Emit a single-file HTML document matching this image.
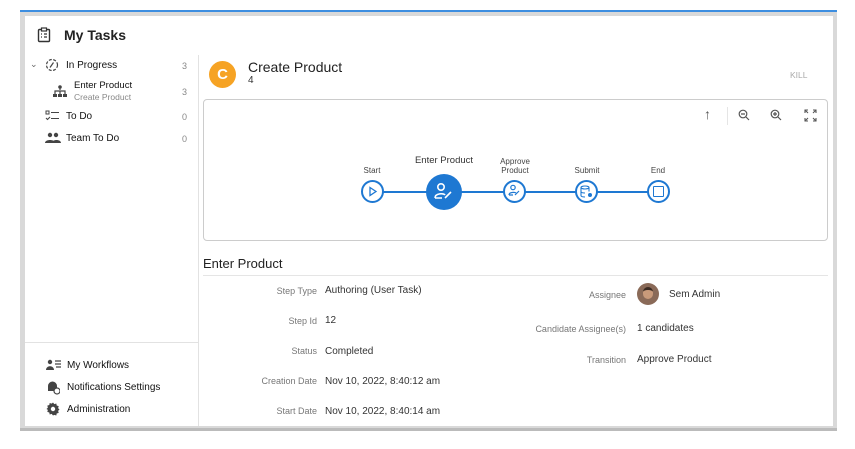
<!DOCTYPE html>
<html><head><style>
*{margin:0;padding:0;box-sizing:border-box}
body{width:855px;height:449px;background:#fff;font-family:"Liberation Sans",sans-serif;position:relative;overflow:hidden;color:#222}
.a{position:absolute;white-space:nowrap}
.frame{left:20px;top:10px;width:817px;height:420px;background:#d9d9d9;border-top:2px solid #3d8ee0}
.inner{left:25px;top:16px;width:808px;height:410px;background:#fff}
.lbl{font-size:9px;color:#777;text-align:right;width:120px}
.val{font-size:10px;color:#333}
.side{font-size:10px;color:#111}
.cnt{font-size:9px;color:#888}
.node{position:absolute;border:2px solid #1e78d2;border-radius:50%;background:#fff}
.nl{font-size:8px;color:#444;text-align:center;position:absolute;line-height:9px}
</style></head><body>
<div class="a frame"></div>
<div class="a inner"></div>
<div class="a" style="left:20px;top:428px;width:817px;height:3px;background:#bbb"></div>
<svg class="a" style="left:37px;top:27px" width="14" height="16" viewBox="0 0 14 16"><rect x="1.5" y="2.5" width="11" height="12" rx="1" fill="none" stroke="#333" stroke-width="1.4"/><rect x="4.5" y="1" width="5" height="3" fill="#fff" stroke="#333" stroke-width="1.2"/><path d="M4 7h1M7 7h3M4 10h1M7 10h3" stroke="#333" stroke-width="1.3"/></svg>
<div class="a" style="left:64px;top:27px;font-size:14px;font-weight:bold;color:#222">My Tasks</div>
<div class="a" style="left:198px;top:55px;width:1px;height:371px;background:#e2e2e2"></div>
<div class="a" style="left:25px;top:342px;width:173px;height:1px;background:#e2e2e2"></div>
<div class="a" style="left:30px;top:59px;font-size:9px;color:#666">⌄</div>
<svg class="a" style="left:45px;top:58px" width="14" height="14"><circle cx="7" cy="7" r="5.5" fill="none" stroke="#444" stroke-width="1.2" stroke-dasharray="3 1.5"/><path d="M5 9.5l3.5-5" stroke="#444" stroke-width="1.2"/></svg>
<div class="a side" style="left:66px;top:60px">In Progress</div><div class="a cnt" style="left:182px;top:61px">3</div>
<svg class="a" style="left:52px;top:84px" width="16" height="14"><path d="M8 2v4M3 10V7h10v3M8 7v3" stroke="#444" stroke-width="1.2" fill="none"/><circle cx="8" cy="3" r="1.8" fill="#444"/><rect x="1" y="10" width="4" height="3" fill="#444"/><rect x="6" y="10" width="4" height="3" fill="#444"/><rect x="11" y="10" width="4" height="3" fill="#444"/></svg>
<div class="a side" style="left:74px;top:80px;font-size:9.5px">Enter Product</div>
<div class="a" style="left:74px;top:92px;font-size:8.5px;color:#888">Create Product</div>
<div class="a cnt" style="left:182px;top:87px">3</div>
<svg class="a" style="left:45px;top:110px" width="15" height="12"><rect x="1" y="1" width="3" height="3" fill="none" stroke="#444" stroke-width="1"/><path d="M6 2.5h8M6 8.5h8M1 8l1.5 1.5L5 7" stroke="#444" stroke-width="1.1" fill="none"/></svg>
<div class="a side" style="left:66px;top:111px">To Do</div><div class="a cnt" style="left:182px;top:112px">0</div>
<svg class="a" style="left:45px;top:132px" width="16" height="12"><circle cx="5" cy="3" r="2.2" fill="#444"/><circle cx="11" cy="3" r="2.2" fill="#444"/><path d="M0 11c0-4 10-4 10 0zM7 11c0-4 9-4 9 0z" fill="#444"/></svg>
<div class="a side" style="left:66px;top:133px">Team To Do</div><div class="a cnt" style="left:182px;top:134px">0</div>
<svg class="a" style="left:46px;top:359px" width="16" height="12"><circle cx="4" cy="3" r="2.2" fill="#444"/><path d="M0 11c0-5 8-5 8 0z" fill="#444"/><path d="M9 2h6M9 5h6M10 8h5" stroke="#444" stroke-width="1.2"/></svg>
<div class="a side" style="left:67px;top:360px">My Workflows</div>
<svg class="a" style="left:46px;top:379px" width="14" height="16"><path d="M2 12h9V7a4.5 4.5 0 0 0-9 0z" fill="#444"/><circle cx="11" cy="12" r="3" fill="#fff" stroke="#444" stroke-width="1.2"/></svg>
<div class="a side" style="left:67px;top:382px">Notifications Settings</div>
<svg class="a" style="left:46px;top:402px" width="14" height="14" viewBox="0 0 14 14"><path d="M7 0.5l1.3 1.6 2-.6.4 2 2 .6-.6 2 1.4 1.4-1.4 1.4.6 2-2 .6-.4 2-2-.6L7 13.5l-1.3-1.6-2 .6-.4-2-2-.6.6-2L.5 7l1.4-1.4-.6-2 2-.6.4-2 2 .6z" fill="#444"/><circle cx="7" cy="7" r="2.2" fill="#fff"/></svg>
<div class="a side" style="left:67px;top:404px">Administration</div>
<div class="a" style="left:209px;top:61px;width:27px;height:27px;border-radius:50%;background:#f6a324;color:#fff;font-size:15px;font-weight:bold;text-align:center;line-height:27px">C</div>
<div class="a" style="left:248px;top:59px;font-size:14px;color:#222">Create Product</div>
<div class="a" style="left:248px;top:75px;font-size:10px;color:#333">4</div>
<div class="a" style="left:790px;top:70px;font-size:8.5px;color:#aaa">KILL</div>
<div class="a" style="left:203px;top:99px;width:625px;height:142px;border:1px solid #ccc;border-radius:4px"></div>
<div class="a" style="left:704px;top:106px;font-size:14px;color:#555">↑</div>
<div class="a" style="left:727px;top:107px;width:1px;height:18px;background:#e5e5e5"></div>
<svg class="a" style="left:738px;top:109px" width="12" height="12"><circle cx="5" cy="5" r="3.8" fill="none" stroke="#555" stroke-width="1.2"/><path d="M3 5h4M8 8l3 3" stroke="#555" stroke-width="1.2"/></svg>
<svg class="a" style="left:770px;top:109px" width="12" height="12"><circle cx="5" cy="5" r="3.8" fill="none" stroke="#555" stroke-width="1.2"/><path d="M3 5h4M5 3v4M8 8l3 3" stroke="#555" stroke-width="1.2"/></svg>
<svg class="a" style="left:804px;top:109px" width="13" height="13"><path d="M1 4V1h3M9 1h3v3M12 9v3H9M4 12H1V9M1 1l3 3M12 1L9 4M12 12L9 9M1 12l3-3" stroke="#555" stroke-width="1.1" fill="none"/></svg>
<div class="a" style="left:372px;top:191px;width:288px;height:2px;background:#1e78d2"></div>
<div class="node" style="left:361px;top:180px;width:23px;height:23px"></div>
<svg class="a" style="left:368px;top:186px" width="10" height="11"><path d="M2 1.5l6 4-6 4z" fill="none" stroke="#1e78d2" stroke-width="1.3"/></svg>
<div class="a" style="left:426px;top:174px;width:36px;height:36px;border-radius:50%;background:#1e78d2"></div>
<svg class="a" style="left:433px;top:182px" width="22" height="20"><circle cx="8" cy="5" r="3.2" fill="none" stroke="#fff" stroke-width="1.6"/><path d="M2 16c0-5 9-5 10-3M2 16h7M12 16l6-6" stroke="#fff" stroke-width="1.6" fill="none"/></svg>
<div class="node" style="left:503px;top:180px;width:23px;height:23px"></div>
<svg class="a" style="left:507px;top:184px" width="15" height="14"><circle cx="6" cy="3.5" r="2.2" fill="none" stroke="#1e78d2" stroke-width="1.2"/><path d="M2 11c0-3 6-3 7-2M2 11h4M8 11l4-4" stroke="#1e78d2" stroke-width="1.2" fill="none"/></svg>
<div class="node" style="left:575px;top:180px;width:23px;height:23px"></div>
<svg class="a" style="left:580px;top:185px" width="14" height="14"><ellipse cx="5" cy="2.5" rx="4" ry="1.5" fill="none" stroke="#1e78d2" stroke-width="1.1"/><path d="M1 2.5v8c0 1 2 1.5 4 1.5M9 2.5v4M1 6.5c0 1 2 1.5 4 1.5" stroke="#1e78d2" stroke-width="1.1" fill="none"/><circle cx="10" cy="10" r="2" fill="#1e78d2"/></svg>
<div class="node" style="left:647px;top:180px;width:23px;height:23px"></div>
<div class="a" style="left:653px;top:186px;width:11px;height:11px;border:1.5px solid #1e78d2;border-radius:1px"></div>
<div class="nl" style="left:352px;top:166px;width:40px">Start</div>
<div class="nl" style="left:404px;top:156px;width:80px;font-size:9.5px;color:#333">Enter Product</div>
<div class="nl" style="left:491px;top:157px;width:48px">Approve<br>Product</div>
<div class="nl" style="left:562px;top:166px;width:50px">Submit</div>
<div class="nl" style="left:638px;top:166px;width:40px">End</div>
<div class="a" style="left:203px;top:256px;font-size:13px;color:#222">Enter Product</div>
<div class="a" style="left:203px;top:275px;width:625px;height:1px;background:#e5e5e5"></div>
<div class="a lbl" style="left:197px;top:286px">Step Type</div><div class="a val" style="left:325px;top:285px">Authoring (User Task)</div>
<div class="a lbl" style="left:197px;top:316px">Step Id</div><div class="a val" style="left:325px;top:315px">12</div>
<div class="a lbl" style="left:197px;top:346px">Status</div><div class="a val" style="left:325px;top:346px">Completed</div>
<div class="a lbl" style="left:197px;top:376px">Creation Date</div><div class="a val" style="left:325px;top:376px">Nov 10, 2022, 8:40:12 am</div>
<div class="a lbl" style="left:197px;top:406px">Start Date</div><div class="a val" style="left:325px;top:406px">Nov 10, 2022, 8:40:14 am</div>
<div class="a lbl" style="left:506px;top:290px">Assignee</div>
<div class="a" style="left:637px;top:283px;width:22px;height:22px;border-radius:50%;background:#8a6a58;overflow:hidden"><div style="margin:4px auto 0;width:10px;height:12px;border-radius:5px;background:#c99a7a;border-top:3px solid #3a2a22"></div></div>
<div class="a val" style="left:669px;top:289px">Sem Admin</div>
<div class="a lbl" style="left:506px;top:324px">Candidate Assignee(s)</div><div class="a val" style="left:637px;top:323px">1 candidates</div>
<div class="a lbl" style="left:506px;top:355px">Transition</div><div class="a val" style="left:637px;top:354px">Approve Product</div>
</body></html>
